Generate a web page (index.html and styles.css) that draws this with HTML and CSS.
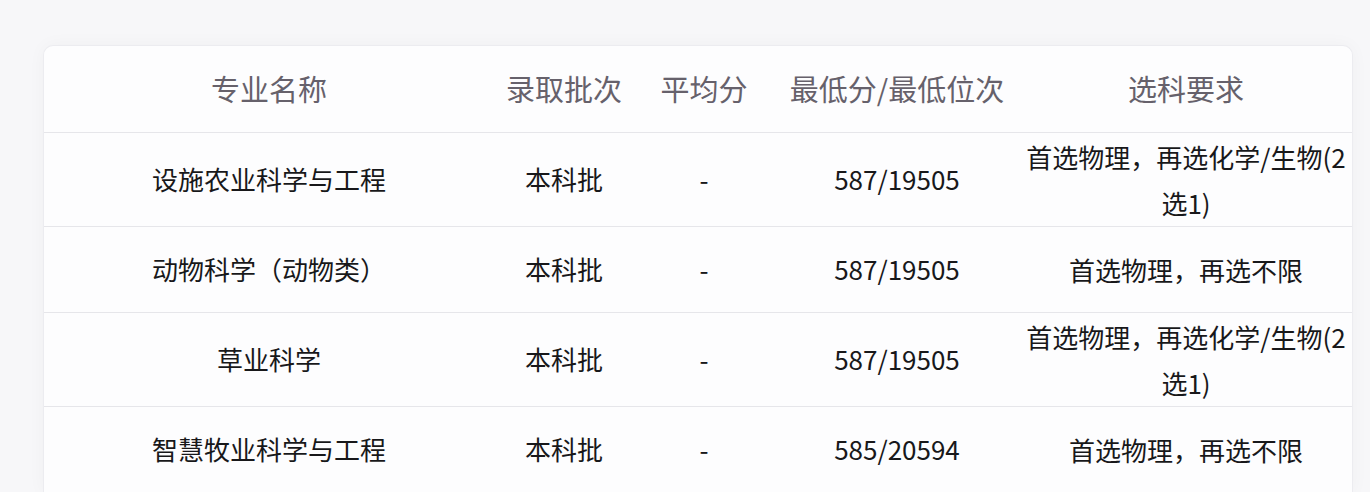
FILE: index.html
```html
<!DOCTYPE html>
<html lang="zh-CN">
<head>
<meta charset="utf-8">
<title>录取分数</title>
<link rel="stylesheet" href="styles.css">
</head>
<body>
<div class="card">
  <table class="score-table">
    <colgroup>
      <col class="c-name">
      <col class="c-batch">
      <col class="c-avg">
      <col class="c-min">
      <col class="c-req">
    </colgroup>
    <thead>
      <tr>
        <th>专业名称</th>
        <th>录取批次</th>
        <th>平均分</th>
        <th>最低分/最低位次</th>
        <th>选科要求</th>
      </tr>
    </thead>
    <tbody>
      <tr>
        <td>设施农业科学与工程</td>
        <td>本科批</td>
        <td>-</td>
        <td>587/19505</td>
        <td class="req">首选物理，再选化学/生物(2选1)</td>
      </tr>
      <tr>
        <td>动物科学（动物类）</td>
        <td>本科批</td>
        <td>-</td>
        <td>587/19505</td>
        <td class="req">首选物理，再选不限</td>
      </tr>
      <tr>
        <td>草业科学</td>
        <td>本科批</td>
        <td>-</td>
        <td>587/19505</td>
        <td class="req">首选物理，再选化学/生物(2选1)</td>
      </tr>
      <tr>
        <td>智慧牧业科学与工程</td>
        <td>本科批</td>
        <td>-</td>
        <td>585/20594</td>
        <td class="req">首选物理，再选不限</td>
      </tr>
    </tbody>
  </table>
</div>
</body>
</html>
```

FILE: styles.css
```css
html, body {
  margin: 0;
  padding: 0;
  background: #f7f7f9;
  font-family: "Noto Sans CJK SC", "Noto Sans", sans-serif;
}

body {
  padding: 45px 17px 0 43px;
  height: 492px;
  box-sizing: border-box;
  overflow: hidden;
}

.card {
  width: 1310px;
  background: #fdfdfe;
  border: 1px solid #ececf0;
  border-bottom: none;
  border-radius: 10px 10px 0 0;
  box-shadow: 0 0 18px rgba(0, 0, 0, 0.035);
  box-sizing: border-box;
  overflow: hidden;
}

.score-table {
  width: 100%;
  border-collapse: collapse;
  table-layout: fixed;
}

.c-name { width: 450px; }
.c-batch { width: 140px; }
.c-avg { width: 140px; }
.c-min { width: 246px; }
.c-req { width: 332px; }

.score-table th {
  height: 83px;
  padding: 0 0 3px;
  font-size: 29px;
  font-weight: 400;
  color: #66616b;
  text-align: center;
  vertical-align: middle;
  border-bottom: 1px solid #e6e6ea;
}

.score-table td {
  height: 82px;
  padding: 0 3px 3px;
  font-size: 26px;
  line-height: 45px;
  color: #18181a;
  text-align: center;
  vertical-align: middle;
  border-bottom: 1px solid #e6e6ea;
}

.score-table td.req {
  line-height: 46px;
  padding-bottom: 0;
  padding-top: 1px;
}
```
